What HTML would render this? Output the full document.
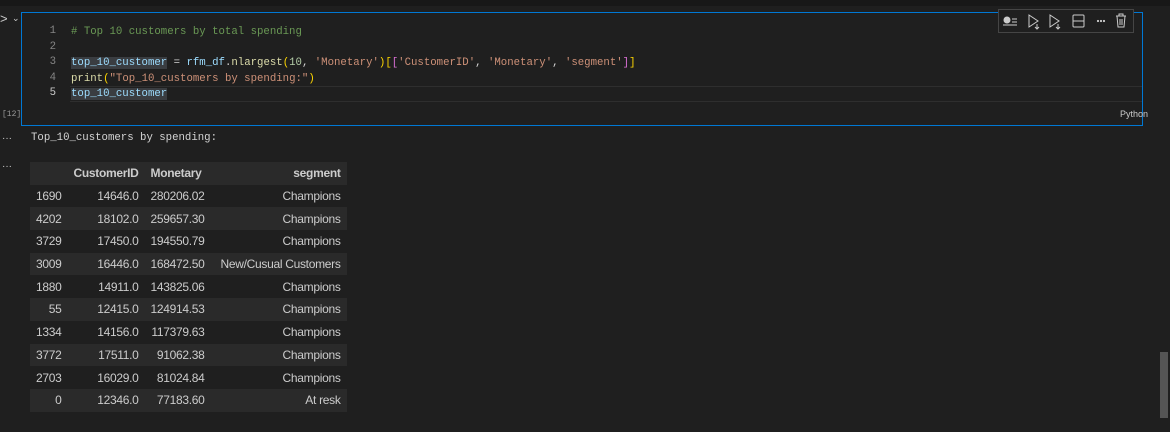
<!DOCTYPE html>
<html><head><style>
body{margin:0;width:1170px;height:432px;background:#1f1f1f;overflow:hidden;position:relative;font-family:"Liberation Sans",sans-serif}
.top{position:absolute;left:0;top:0;width:1170px;height:6px;background:#181818}
.cell{position:absolute;left:21px;top:12px;width:1122px;height:114px;border:1px solid #0078d4;background:#1f1f1f;box-sizing:border-box}
.code{position:absolute;font-family:"Liberation Mono",monospace;font-size:10.7px;white-space:pre;line-height:15.5px;color:#d4d4d4}
.ln{position:absolute;left:40px;width:16px;text-align:right;font-family:"Liberation Mono",monospace;font-size:10.7px;color:#858585}
.curline{position:absolute;left:70px;top:86px;width:1072px;height:14px;border-top:1px solid #2e2e2e;border-bottom:1px solid #2e2e2e}
.hl{background:#3a3d41}
.k{color:#9cdcfe}.f{color:#dcdcaa}.s{color:#ce9178}.n{color:#b5cea8}.c{color:#6a9955}.y{color:#ffd700}.p{color:#da70d6}.b{color:#179fff}
.tb{position:absolute;left:998px;top:9px;width:136px;height:24px;background:#1f1f1f;border:1px solid #454545;box-sizing:border-box}
table{position:absolute;left:30px;top:162px;border-collapse:collapse;font-family:"Liberation Sans",sans-serif;font-size:12px;color:#ccc;letter-spacing:-0.3px}
td,th{height:22.7px;padding:0 6px;text-align:right;white-space:nowrap}
th{font-weight:bold}
tr:nth-child(odd){background:#2a2a2a}
</style></head><body>
<div class="top"></div>
<div style="position:absolute;left:0;top:11px;color:#ccc;font-size:13px">&gt;</div>
<div style="position:absolute;left:12px;top:13px;color:#ccc;font-size:9px">&#8964;</div>
<div style="position:absolute;left:2px;top:110px;color:#999;font-size:8px;font-family:'Liberation Mono',monospace">[12]</div>
<div class="cell"></div>
<div class="curline"></div>
<div class="ln" style="top:25px">1</div>
<div class="ln" style="top:41px">2</div>
<div class="ln" style="top:56px">3</div>
<div class="ln" style="top:72px">4</div>
<div class="ln" style="top:87px;color:#ccc">5</div>
<div class="code" style="left:71px;top:25px"><span class="c"># Top 10 customers by total spending</span>

<span class="k hl">top_10_customer</span> = <span class="k">rfm_df</span>.<span class="f">nlargest</span><span class="y">(</span><span class="n">10</span>, <span class="s">'Monetary'</span><span class="y">)</span><span class="y">[</span><span class="p">[</span><span class="s">'CustomerID'</span>, <span class="s">'Monetary'</span>, <span class="s">'segment'</span><span class="p">]</span><span class="y">]</span>
<span class="f">print</span><span class="y">(</span><span class="s">"Top_10_customers by spending:"</span><span class="y">)</span>
<span class="k hl">top_10_customer</span></div>
<div class="tb"></div>
<svg style="position:absolute;left:998px;top:9px" width="136" height="24" fill="none" stroke="#ccc" stroke-width="1">
<circle cx="9" cy="11" r="3" fill="#ccc"/><path d="M14 10h5M14 13h5M5 16h14"/>
<path d="M31 6l9 6-9 6z"/><path d="M39 15v5M37 18l2 2 2-2"/>
<path d="M52 6l9 6-9 6z"/><path d="M60 15v5M58 18l2 2 2-2"/>
<rect x="75" y="6" width="11" height="12" rx="1"/><path d="M75 12h11"/>
<circle cx="100" cy="12" r=".6" fill="#ccc"/><circle cx="103" cy="12" r=".6" fill="#ccc"/><circle cx="106" cy="12" r=".6" fill="#ccc"/>
<path d="M118 7h10M121 7V5h4v2M119 7l1 11h6l1-11M122 10v6M124 10v6"/>
</svg>
<div style="position:absolute;left:1120px;top:109px;color:#ccc;font-size:9px">Python</div>
<div style="position:absolute;left:2px;top:133px;color:#ccc;font-size:10px">···</div>
<div style="position:absolute;left:2px;top:161px;color:#ccc;font-size:10px">···</div>
<div class="code" style="left:31px;top:131px">Top_10_customers by spending:</div>
<table>
<tr><th style="width:22px"></th><th>CustomerID</th><th style="text-align:left">Monetary</th><th style="width:124px">segment</th></tr>
<tr><td>1690</td><td>14646.0</td><td>280206.02</td><td>Champions</td></tr>
<tr><td>4202</td><td>18102.0</td><td>259657.30</td><td>Champions</td></tr>
<tr><td>3729</td><td>17450.0</td><td>194550.79</td><td>Champions</td></tr>
<tr><td>3009</td><td>16446.0</td><td>168472.50</td><td>New/Cusual Customers</td></tr>
<tr><td>1880</td><td>14911.0</td><td>143825.06</td><td>Champions</td></tr>
<tr><td>55</td><td>12415.0</td><td>124914.53</td><td>Champions</td></tr>
<tr><td>1334</td><td>14156.0</td><td>117379.63</td><td>Champions</td></tr>
<tr><td>3772</td><td>17511.0</td><td>91062.38</td><td>Champions</td></tr>
<tr><td>2703</td><td>16029.0</td><td>81024.84</td><td>Champions</td></tr>
<tr><td>0</td><td>12346.0</td><td>77183.60</td><td>At resk</td></tr>
</table>
<div style="position:absolute;left:1160px;top:352px;width:8px;height:66px;background:#555"></div>
</body></html>
